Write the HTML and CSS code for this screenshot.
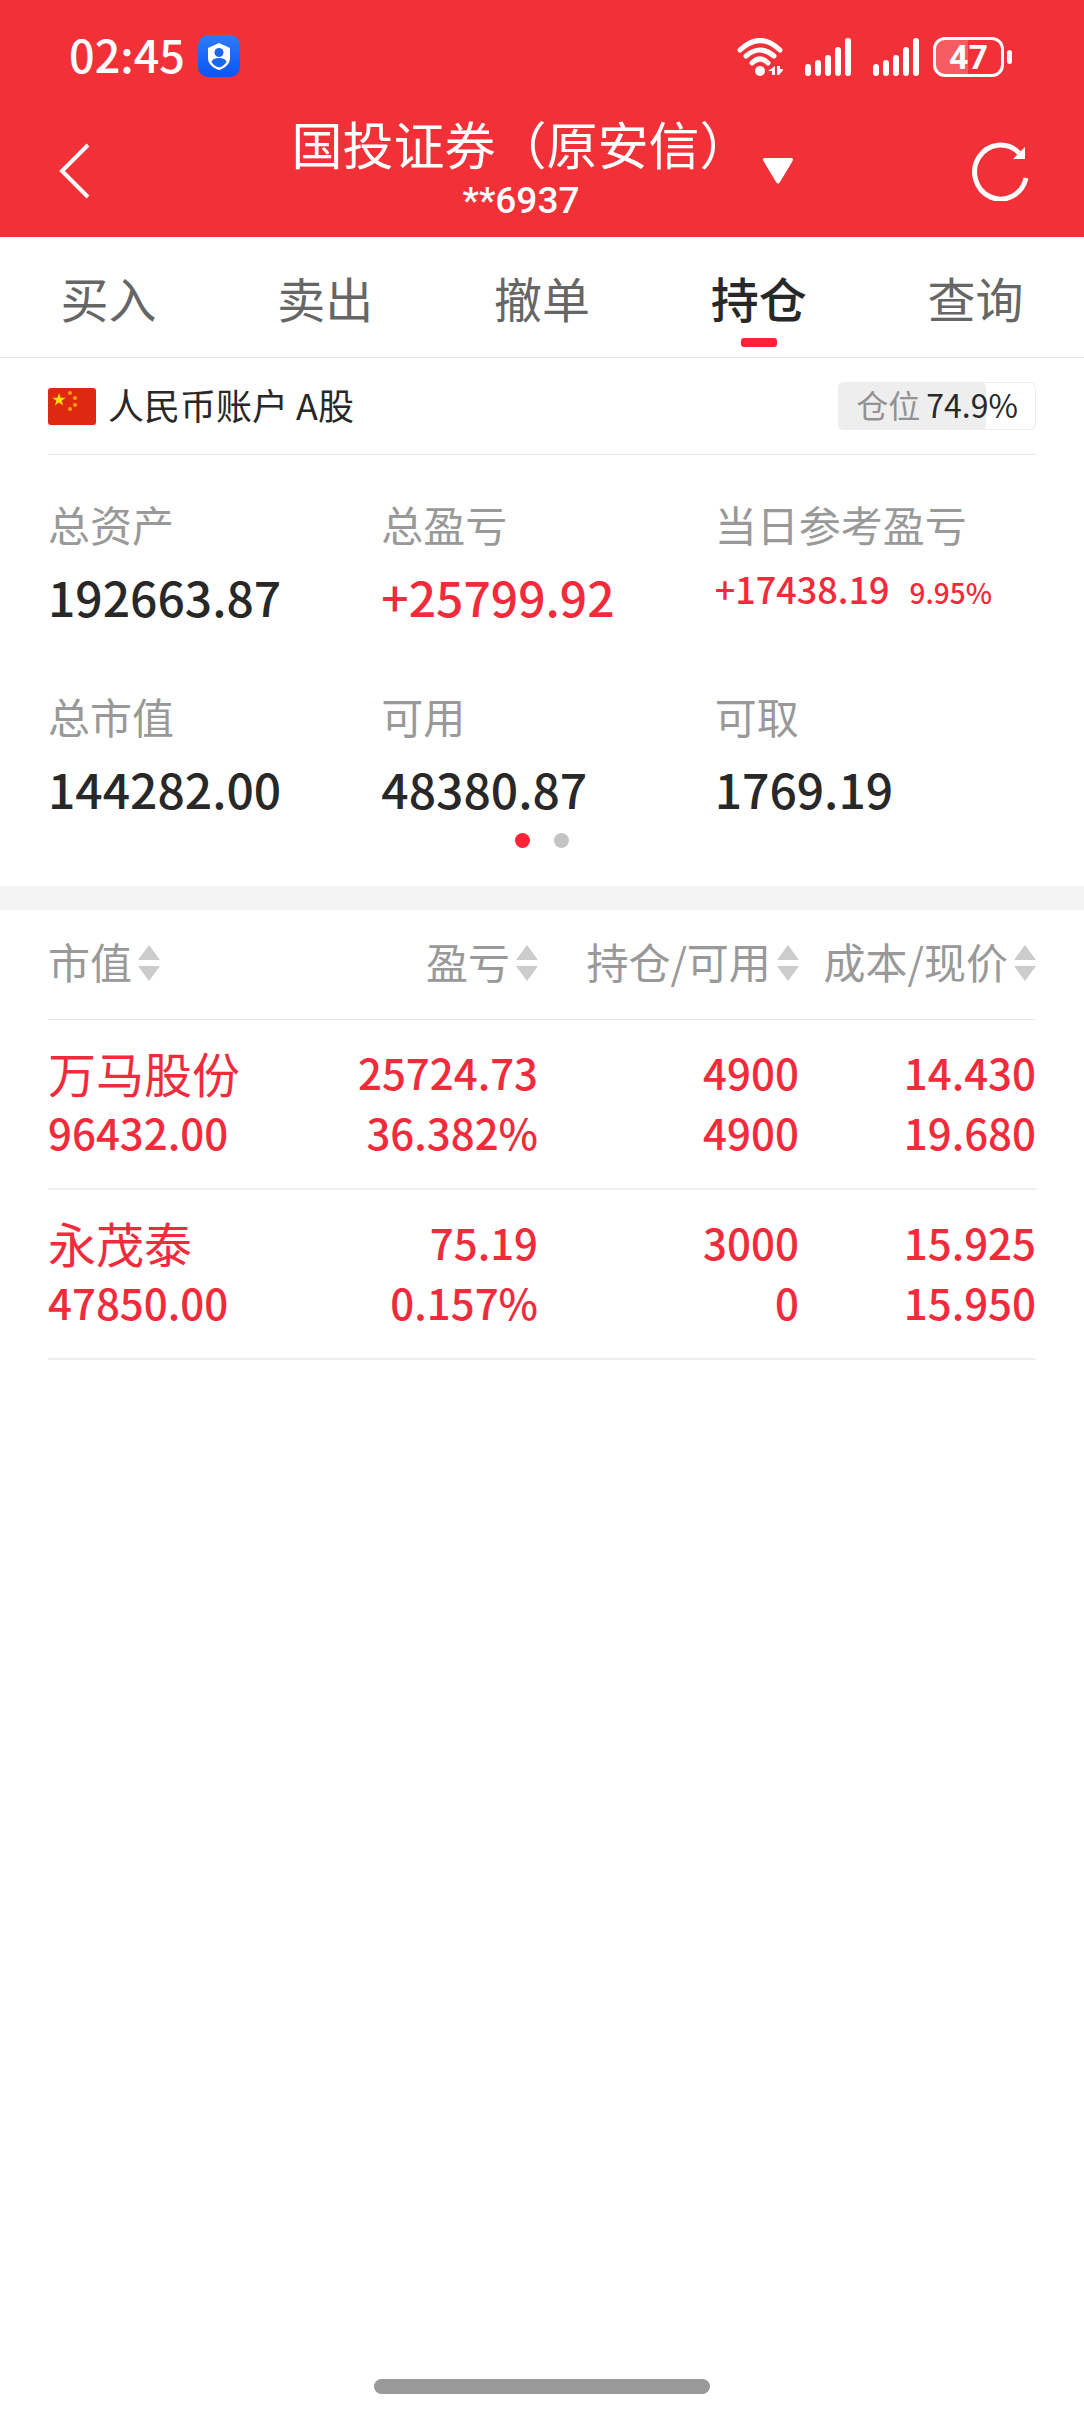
FILE: index.html
```html
<!DOCTYPE html>
<html lang="zh-CN">

<head>
    <meta charset="UTF-8">
    <meta name="viewport" content="width=device-width, initial-scale=1.0">
    <title>持仓</title>
    <link rel="stylesheet" href="styles.css">
</head>

<body>
    <header class="header">
        <div class="status">
            <span class="time">02:45</span>
            <svg class="app-icon" viewBox="0 0 42 42">
                <defs>
                    <linearGradient id="blue" x1="0" y1="0" x2="0" y2="1">
                        <stop offset="0" stop-color="#2e7bf6" />
                        <stop offset="1" stop-color="#0a55f5" />
                    </linearGradient>
                </defs>
                <rect width="42" height="42" rx="10" fill="url(#blue)" />
                <path d="M21 8l11 5v10c0 6-5 10-11 12-6-2-11-6-11-12V13z" fill="#fff" />
                <circle cx="21" cy="17.500" r="4.500" fill="#1a67f5" />
                <path d="M13.500 27c1-5.500 14-5.500 15 0-2 3-4 4.500-7.500 5.500-3.500-1-5.500-2.500-7.500-5.500z" fill="#1a67f5" />
            </svg>
            <div class="status-right">
                <svg class="wifi" viewBox="0 0 46 38">
                    <g fill="none" stroke="#fff" stroke-width="5" stroke-linecap="round">
                        <path d="M3 12Q23-7 43 12" />
                        <path d="M9 18Q23 6 37 18" />
                        <path d="M15 25Q23 17 31 25" />
                    </g>
                    <circle cx="23" cy="33" r="5" fill="#fff" />
                    <path d="M38 28v9h-3v-4h-4zM40 28v9h2l5-6h-4v-3z" fill="#fff" />
                </svg>
                <svg class="signal" viewBox="0 0 46 38">
                    <path d="M3 29v6M13 25v10M23 20v15M33 12v23M43 3v32" fill="none" stroke="#fff" stroke-width="6"
                        stroke-linecap="round" />
                </svg>
                <svg class="signal" viewBox="0 0 46 38">
                    <path d="M3 29v6M13 25v10M23 20v15M33 12v23M43 3v32" fill="none" stroke="#fff" stroke-width="6"
                        stroke-linecap="round" />
                </svg>
                <div class="battery"><span>47</span></div>
            </div>
        </div>
        <div class="navbar">
            <button class="nav-btn" aria-label="返回">
                <svg width="32" height="56" viewBox="0 0 32 56">
                    <path d="M29 2L3 28l26 26" fill="none" stroke="#fff" stroke-width="4" />
                </svg>
            </button>
            <button class="account">
                <span class="account-text">
                    <span class="broker">国投证券（原安信）</span>
                    <span class="account-no">**6937</span>
                </span>
                <svg class="caret" width="30" height="26" viewBox="0 0 30 26">
                    <path d="M1 0h28q2 1 0 4L17 24q-2 3-4 0L1 4q-2-3 0-4z" fill="#fff" />
                </svg>
            </button>
            <button class="nav-btn" aria-label="刷新">
                <svg width="58" height="60" viewBox="0 0 58 60">
                    <path d="M55 37A26 27 0 1 1 48 12" fill="none" stroke="#fff" stroke-width="5" />
                    <path d="M54 6v12H42z" fill="#fff" />
                </svg>
            </button>
        </div>
    </header>

    <nav class="tabs">
        <a href="#">买入</a>
        <a href="#">卖出</a>
        <a href="#">撤单</a>
        <a href="#" class="active">持仓</a>
        <a href="#">查询</a>
    </nav>

    <section class="summary">
        <div class="account-row">
            <svg class="flag" viewBox="0 0 48 37">
                <rect width="48" height="37" rx="3" fill="#de2910" />
                <path d="M11 5l1.600 4.700h5l-4 3 1.500 4.800-4.100-2.900L6.900 17.500l1.500-4.800-4-3h5z" fill="#ffde00" />
                <g fill="#f5a010">
                    <circle cx="22" cy="5" r="2" />
                    <circle cx="27" cy="10" r="2" />
                    <circle cx="27" cy="17" r="2" />
                    <circle cx="22" cy="21" r="2" />
                </g>
            </svg>
            <span class="account-name">人民币账户 A股</span>
            <div class="position">
                <div class="position-bar" style="width: 74.9%"></div>
                <span class="position-label">仓位</span>
                <span>74.9%</span>
            </div>
        </div>

        <dl class="assets">
            <div>
                <dt>总资产</dt>
                <dd>192663.87</dd>
            </div>
            <div>
                <dt>总盈亏</dt>
                <dd class="up">+25799.92</dd>
            </div>
            <div>
                <dt>当日参考盈亏</dt>
                <dd class="up today">+17438.19<small>9.95%</small></dd>
            </div>
            <div>
                <dt>总市值</dt>
                <dd>144282.00</dd>
            </div>
            <div>
                <dt>可用</dt>
                <dd>48380.87</dd>
            </div>
            <div>
                <dt>可取</dt>
                <dd>1769.19</dd>
            </div>
        </dl>

        <div class="dots">
            <i class="on"></i>
            <i></i>
        </div>
    </section>

    <main class="holdings">
        <table>
            <colgroup>
                <col class="col-value">
                <col class="col-profit">
                <col class="col-amount">
                <col class="col-price">
            </colgroup>
            <thead>
                <tr>
                    <th><button>市值<i class="sort"></i></button></th>
                    <th><button>盈亏<i class="sort"></i></button></th>
                    <th><button>持仓/可用<i class="sort"></i></button></th>
                    <th><button>成本/现价<i class="sort"></i></button></th>
                </tr>
            </thead>
            <tbody>
                <tr>
                    <td><span class="name">万马股份</span><span>96432.00</span></td>
                    <td><span>25724.73</span><span>36.382%</span></td>
                    <td><span>4900</span><span>4900</span></td>
                    <td><span>14.430</span><span>19.680</span></td>
                </tr>
                <tr>
                    <td><span class="name">永茂泰</span><span>47850.00</span></td>
                    <td><span>75.19</span><span>0.157%</span></td>
                    <td><span>3000</span><span>0</span></td>
                    <td><span>15.925</span><span>15.950</span></td>
                </tr>
            </tbody>
        </table>
    </main>

    <div class="home-bar"></div>
</body>

</html>
```
FILE: styles.css
```css
* {
    margin: 0;
    padding: 0;
    box-sizing: border-box;
}

body {
    min-height: 100vh;
    display: flex;
    flex-direction: column;
    background-color: #fff;
    color: #282828;
    font-family: "Noto Sans CJK SC", "Noto Sans", sans-serif;
}

button {
    border: none;
    background: none;
    color: inherit;
    font: inherit;
    cursor: pointer;
}

svg {
    display: block;
}

a {
    color: inherit;
    text-decoration: none;
}

/* 顶部 */
.header {
    background-color: #f13038;
    color: #fff;
}

.status {
    height: 112px;
    padding: 0 72px 0 69px;
    display: flex;
    align-items: center;
}

.time {
    padding-bottom: 4px;
    font-size: 45px;
    font-weight: 500;
    line-height: 48px;
}

.app-icon {
    width: 42px;
    height: 42px;
    margin-left: 13px;
}

.status-right {
    margin-left: auto;
    padding-top: 2px;
    display: flex;
    align-items: center;
    gap: 22px;
}

.wifi,
.signal {
    width: 46px;
    height: 38px;
}

.battery {
    width: 71px;
    height: 40px;
    margin: 0 8px 0 -8px;
    border: 3px solid #fff;
    border-radius: 12px;
    background: linear-gradient(90deg, #f65c62 50%, transparent 50%);
    text-align: center;
    font: 700 34px/34px Roboto, sans-serif;
    position: relative;
}

.battery::after {
    content: "";
    width: 5px;
    height: 14px;
    border-radius: 3px;
    background-color: #fff;
    position: absolute;
    right: -11px;
    top: 10px;
}

.navbar {
    height: 125px;
    padding: 0 55px 8px 59px;
    display: flex;
    align-items: center;
    justify-content: space-between;
}

.account {
    padding-left: 22px;
    display: flex;
    align-items: center;
    gap: 12px;
}

.account-text {
    display: flex;
    flex-direction: column;
    align-items: center;
}

.broker {
    font-size: 51px;
    line-height: 60px;
}

.account-no {
    font-family: Roboto, sans-serif;
    font-size: 37px;
    font-weight: 500;
    line-height: 56px;
}

/* 标签栏 */
.tabs {
    height: 121px;
    display: flex;
    border-bottom: 1px solid #e6e6e6;
}

.tabs a {
    flex: 1;
    color: #666;
    font-size: 48px;
    line-height: 120px;
    text-align: center;
    position: relative;
}

.tabs .active {
    color: #282828;
    font-weight: 500;
}

.tabs .active::after {
    content: "";
    width: 36px;
    height: 9px;
    margin-left: -18px;
    border-radius: 3px;
    background-color: #fd2438;
    position: absolute;
    left: 50%;
    bottom: 10px;
}

/* 账户资产 */
.summary {
    border-bottom: 24px solid #f4f4f4;
}

.account-row {
    height: 97px;
    margin: 0 48px;
    border-bottom: 1px solid #e6e6e6;
    display: flex;
    align-items: center;
}

.flag {
    width: 48px;
    height: 37px;
}

.account-name {
    margin-left: 12px;
    padding-bottom: 4px;
    font-size: 36px;
    line-height: 48px;
}

.position {
    height: 48px;
    margin-left: auto;
    padding: 0 18px 4px;
    border-radius: 6px;
    box-shadow: inset 0 0 0 1px #eee;
    display: flex;
    align-items: center;
    gap: 6px;
    font-size: 32px;
    line-height: 44px;
    position: relative;
}

.position span {
    position: relative;
}

.position .position-label {
    color: #929292;
}

.position-bar {
    height: 100%;
    border-radius: 6px;
    background-color: #eee;
    position: absolute;
    left: 0;
    top: 0;
}

.assets {
    padding: 41px 36px 0 48px;
    display: grid;
    grid-template-columns: repeat(3, 1fr);
    row-gap: 56px;
}

.assets dt {
    color: #999;
    font-size: 42px;
    line-height: 56px;
}

.assets dd {
    padding-top: 8px;
    font-size: 48px;
    font-weight: 500;
    line-height: 72px;
}

.assets .up {
    color: #f12b3b;
}

.assets .today {
    font-size: 36px;
    line-height: 56px;
}

.today small {
    margin-left: 20px;
    font-size: 28px;
}

.dots {
    padding: 9px 0 38px;
    display: flex;
    justify-content: center;
    gap: 24px;
}

.dots i {
    width: 15px;
    height: 15px;
    border-radius: 50%;
    background-color: #c4c4c4;
}

.dots .on {
    background-color: #fd2438;
}

/* 持仓列表 */
.holdings {
    flex: 1;
    padding: 0 48px;
}

.holdings table {
    width: 100%;
    table-layout: fixed;
    border-collapse: collapse;
}

.col-value {
    width: 22%;
}

.col-profit {
    width: 27.6%;
}

.col-amount {
    width: 26.4%;
}

.col-price {
    width: 24%;
}

.holdings th {
    height: 109px;
    padding-bottom: 14px;
    border-bottom: 1px solid #e6e6e6;
    color: #999;
    font-size: 42px;
    font-weight: 400;
    line-height: 56px;
    text-align: right;
    vertical-align: middle;
    white-space: nowrap;
}

.holdings th:first-child,
.holdings td:first-child {
    text-align: left;
}

.holdings th button {
    display: inline-flex;
    align-items: center;
    gap: 6px;
    vertical-align: middle;
}

.sort {
    padding-top: 4px;
}

.sort::before,
.sort::after {
    content: "";
    display: block;
    border: 0 solid transparent;
    border-left-width: 11px;
    border-right-width: 11px;
}

.sort::before {
    margin-bottom: 6px;
    border-bottom: 15px solid #ccc;
}

.sort::after {
    border-top: 15px solid #ccc;
}

.holdings td {
    height: 170px;
    padding-bottom: 4px;
    border-bottom: 2px solid #efefef;
    color: #f12b3b;
    font-size: 42px;
    font-weight: 500;
    line-height: 60px;
    text-align: right;
    vertical-align: middle;
}

.holdings td span {
    display: block;
}

.holdings .name {
    font-size: 48px;
    font-weight: 400;
}

/* 底部手势条 */
.home-bar {
    width: 31%;
    height: 15px;
    margin: 0 auto 18px;
    border-radius: 8px;
    background-color: #999;
}
```
